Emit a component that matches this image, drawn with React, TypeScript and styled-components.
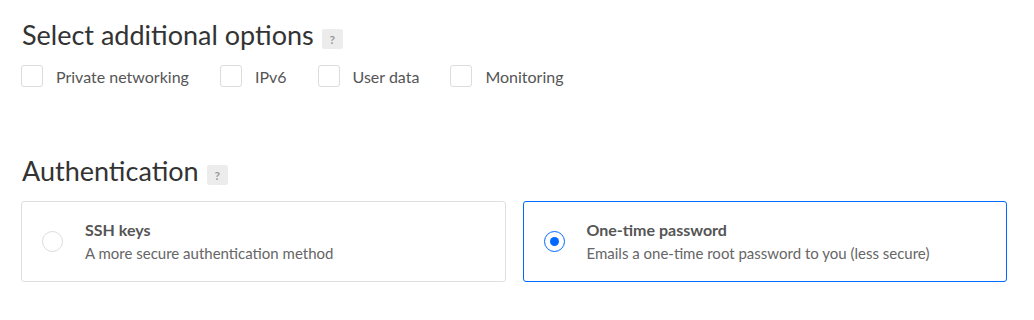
import React, { useState } from "react";
import styled, { createGlobalStyle } from "styled-components";

const GlobalStyle = createGlobalStyle`
  html, body {
    margin: 0;
    padding: 0;
    background: #fff;
  }
  body {
    font-family: Lato, "Open Sans", sans-serif;
    -webkit-font-smoothing: antialiased;
  }
`;

const Page = styled.div`
  width: 986px;
  padding: 19px 0 0 21px;
`;

const Section = styled.section<{ $gap?: number }>`
  margin-bottom: ${(p) => p.$gap ?? 0}px;
`;

const Heading = styled.div`
  display: flex;
  align-items: center;
  gap: 8px;
  height: 32px;
`;

const Title = styled.h2`
  margin: 0;
  font-size: 27px;
  line-height: 32px;
  font-weight: 400;
  color: #333;
  padding-left: 1px;
`;

const Help = styled.span`
  display: inline-flex;
  align-items: center;
  justify-content: center;
  width: 21px;
  height: 20px;
  margin-top: 8px;
  border-radius: 2px;
  background: #ececec;
  color: #999;
  font-size: 12px;
  font-weight: 700;
`;

const Options = styled.div`
  display: flex;
  align-items: center;
  gap: 31px;
  margin-top: 14px;
`;

const CheckOption = styled.label`
  display: flex;
  align-items: center;
  gap: 13px;
  font-size: 16px;
  color: #555;
  cursor: pointer;
`;

const Box = styled.span<{ $on: boolean }>`
  width: 20px;
  height: 20px;
  border: 1px solid ${(p) => (p.$on ? "#0069ff" : "#dcdcdc")};
  border-radius: 3px;
  background: ${(p) => (p.$on ? "#0069ff" : "#fff")};
`;

const Cards = styled.div`
  display: grid;
  grid-template-columns: 1fr 1fr;
  gap: 17px;
  margin-top: 14px;
`;

const Card = styled.div<{ $active: boolean }>`
  display: flex;
  align-items: center;
  gap: 22px;
  height: 79px;
  padding: 0 20px;
  border: 1px solid ${(p) => (p.$active ? "#0069ff" : "#dfdfdf")};
  border-radius: 3px;
  cursor: pointer;
`;

const Radio = styled.span<{ $on: boolean }>`
  flex: none;
  display: flex;
  align-items: center;
  justify-content: center;
  width: 19px;
  height: 19px;
  border: 1px solid ${(p) => (p.$on ? "#0069ff" : "#dcdcdc")};
  border-radius: 50%;

  &::after {
    content: "";
    display: ${(p) => (p.$on ? "block" : "none")};
    width: 9px;
    height: 9px;
    border-radius: 50%;
    background: #0069ff;
  }
`;

const CardText = styled.div`
  display: flex;
  flex-direction: column;
`;

const CardTitle = styled.div`
  font-size: 16px;
  line-height: 22px;
  font-weight: 700;
  color: #555;
`;

const CardDesc = styled.div`
  margin-top: 1px;
  font-size: 15px;
  line-height: 23px;
  color: #666;
`;

const extras = ["Private networking", "IPv6", "User data", "Monitoring"];

const methods = [
  { id: "ssh", title: "SSH keys", desc: "A more secure authentication method" },
  {
    id: "otp",
    title: "One-time password",
    desc: "Emails a one-time root password to you (less secure)",
  },
];

export default function App() {
  const [checked, setChecked] = useState<string[]>([]);
  const [method, setMethod] = useState("otp");

  const toggle = (name: string) =>
    setChecked((c) => (c.includes(name) ? c.filter((x) => x !== name) : [...c, name]));

  return (
    <>
      <GlobalStyle />
      <Page>
        <Section $gap={68}>
          <Heading>
            <Title>Select additional options</Title>
            <Help>?</Help>
          </Heading>
          <Options>
            {extras.map((name) => (
              <CheckOption key={name} onClick={() => toggle(name)}>
                <Box $on={checked.includes(name)} />
                {name}
              </CheckOption>
            ))}
          </Options>
        </Section>

        <Section>
          <Heading>
            <Title>Authentication</Title>
            <Help>?</Help>
          </Heading>
          <Cards>
            {methods.map((m) => (
              <Card key={m.id} $active={method === m.id} onClick={() => setMethod(m.id)}>
                <Radio $on={method === m.id} />
                <CardText>
                  <CardTitle>{m.title}</CardTitle>
                  <CardDesc>{m.desc}</CardDesc>
                </CardText>
              </Card>
            ))}
          </Cards>
        </Section>
      </Page>
    </>
  );
}
